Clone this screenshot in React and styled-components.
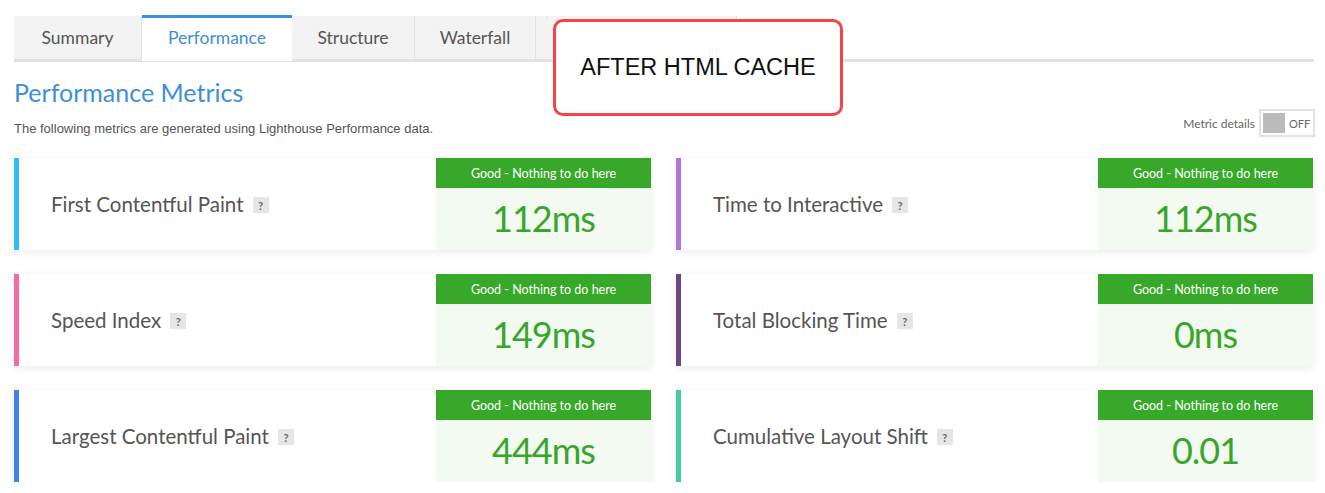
import React from 'react';
import styled, { createGlobalStyle } from 'styled-components';

const GlobalStyle = createGlobalStyle`
    body {
        margin: 0;
        background: #fff;
        font-family: Lato, "Open Sans", sans-serif;
    }
`

const Page = styled.div`
    position: relative;
    width: 1300px;
    padding: 16px 0 0 14px;
`

const TabBar = styled.div`
    display: flex;
    border-bottom: 3px solid #e2e2e2;
    height: 43px;
`

const Tab = styled.div`
    width: ${p => p.w}px;
    height: ${p => (p.active ? 46 : 43)}px;
    box-sizing: border-box;
    display: flex;
    align-items: center;
    justify-content: center;
    font-size: 17.5px;
    color: ${p => (p.active ? '#3d8fd8' : '#555')};
    background: ${p => (p.active ? '#fff' : '#f3f3f3')};
    border-top: ${p => (p.active ? '3px solid #3d8fd8' : 'none')};
    border-right: ${p => (p.active ? 'none' : '1px solid #e2e2e2')};
    padding-bottom: ${p => (p.active ? 4 : 0)}px;
    margin-top: ${p => (p.active ? -1 : 0)}px;
    z-index: ${p => (p.active ? 1 : 0)};
`

const Note = styled.div`
    position: absolute;
    left: 553px;
    top: 19px;
    width: 290px;
    height: 97px;
    box-sizing: border-box;
    border: 3px solid #f24449;
    border-radius: 10px;
    background: #fff;
    display: flex;
    align-items: center;
    justify-content: center;
    font-family: "Liberation Sans", Arial, sans-serif;
    font-size: 23.5px;
    color: #111;
    padding-bottom: 1px;
    z-index: 2;
`

const Heading = styled.h1`
    margin: 15px 0 0 0;
    font-size: 25px;
    font-weight: 400;
    color: #3d8fd8;
    line-height: 30px;
`

const InfoRow = styled.div`
    display: flex;
    justify-content: space-between;
    align-items: flex-end;
    margin-top: 2px;
`

const Lead = styled.p`
    margin: 0 0 2px 0;
    font-family: "Liberation Sans", Arial, sans-serif;
    font-size: 13px;
    color: #555;
`

const Toggle = styled.div`
    display: flex;
    align-items: center;
    gap: 4px;
    font-size: 12px;
    color: #666;
    margin: 0 -1px 1px 0;
`

const Switch = styled.div`
    width: 56px;
    height: 28px;
    box-sizing: border-box;
    border: 2px solid #e2e2e2;
    padding: 2px;
    display: flex;
    align-items: center;
    gap: 4px;
    font-size: 11px;
    color: #666;
`

const Knob = styled.div`
    width: 22px;
    height: 20px;
    background: #bbb;
`

const Grid = styled.div`
    display: grid;
    grid-template-columns: 637px 637px;
    column-gap: 25px;
    row-gap: 24px;
    margin-top: 20px;
`

const Card = styled.div`
    display: flex;
    height: 92px;
    background: #fff;
    border-left: 5px solid ${p => p.accent};
    box-shadow: 0 2px 8px rgba(0, 0, 0, 0.08);
`

const Label = styled.div`
    flex: 1;
    display: flex;
    align-items: center;
    gap: 9px;
    padding-left: 32px;
    font-size: 20.5px;
    color: #555;
`

const Help = styled.span`
    display: inline-flex;
    align-items: center;
    justify-content: center;
    width: 16px;
    height: 16px;
    background: #e6e6e6;
    font-size: 11px;
    font-weight: 700;
    color: #666;
    margin-top: 2px;
`

const Result = styled.div`
    width: 215px;
    display: flex;
    flex-direction: column;
    background: #f3faf1;
`

const Grade = styled.div`
    height: 30px;
    background: #38a82a;
    color: #fff;
    font-size: 12.5px;
    display: flex;
    align-items: center;
    justify-content: center;
`

const Value = styled.div`
    flex: 1;
    display: flex;
    align-items: center;
    justify-content: center;
    font-size: 36px;
    font-weight: 400;
    letter-spacing: -1px;
    color: #38a62b;
    padding-bottom: 3px;
`

const tabs = [
    { name: 'Summary', w: 128 },
    { name: 'Performance', w: 150, active: true },
    { name: 'Structure', w: 123 },
    { name: 'Waterfall', w: 121 },
    { name: '', w: 201 },
]

const metrics = [
    { name: 'First Contentful Paint', value: '112ms', accent: '#2ebdf8' },
    { name: 'Time to Interactive', value: '112ms', accent: '#b374d8' },
    { name: 'Speed Index', value: '149ms', accent: '#f66aa6' },
    { name: 'Total Blocking Time', value: '0ms', accent: '#6c4781' },
    { name: 'Largest Contentful Paint', value: '444ms', accent: '#3f80ea' },
    { name: 'Cumulative Layout Shift', value: '0.01', accent: '#47c9a2' },
]

const App = () => {
    return <Page>
        <GlobalStyle />
        <TabBar>
            {tabs.map(t => <Tab key={t.w} w={t.w} active={t.active}>{t.name}</Tab>)}
        </TabBar>
        <Note>AFTER HTML CACHE</Note>
        <Heading>Performance Metrics</Heading>
        <InfoRow>
            <Lead>The following metrics are generated using Lighthouse Performance data.</Lead>
            <Toggle>
                Metric details
                <Switch><Knob />OFF</Switch>
            </Toggle>
        </InfoRow>
        <Grid>
            {metrics.map(m => (
                <Card key={m.name} accent={m.accent}>
                    <Label>{m.name}<Help>?</Help></Label>
                    <Result>
                        <Grade>Good - Nothing to do here</Grade>
                        <Value>{m.value}</Value>
                    </Result>
                </Card>
            ))}
        </Grid>
    </Page>
}

export default App;
